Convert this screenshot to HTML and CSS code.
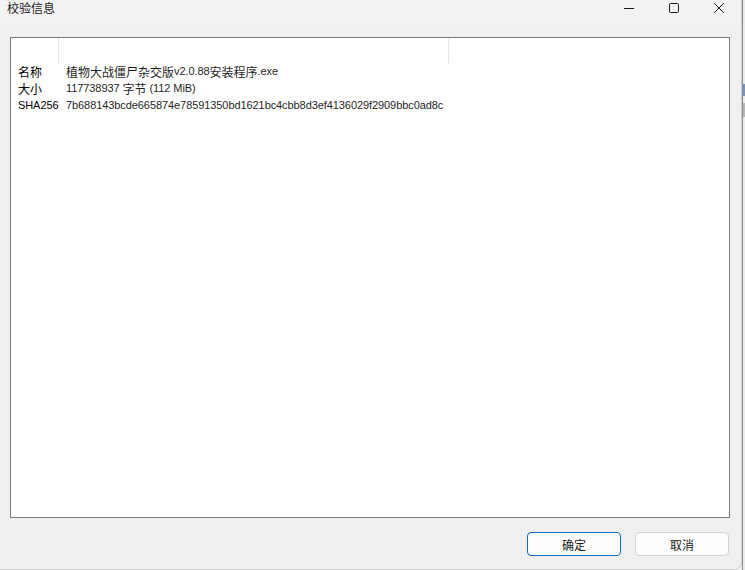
FILE: index.html
```html
<!DOCTYPE html>
<html lang="zh-CN">
<head>
    <meta charset="UTF-8">
    <title>校验信息</title>
    <link rel="stylesheet" href="styles.css">
</head>
<body>
    <div class="desk">
        <div class="window">
            <div class="titlebar">
                <span class="title">校验信息</span>
                <div class="controls">
                    <span class="ctl">
                        <svg width="12" height="12" viewBox="0 0 12 12"><path d="M1 6.5h10" stroke="#1a1a1a" stroke-width="1"/></svg>
                    </span>
                    <span class="ctl">
                        <svg width="12" height="12" viewBox="0 0 12 12"><rect x="1.5" y="1.5" width="9" height="9" rx="1.2" fill="none" stroke="#1a1a1a" stroke-width="1"/></svg>
                    </span>
                    <span class="ctl">
                        <svg width="12" height="12" viewBox="0 0 12 12"><path d="M1 1l10 10M11 1L1 11" stroke="#1a1a1a" stroke-width="1"/></svg>
                    </span>
                </div>
            </div>

            <div class="content">
                <div class="listview">
                    <div class="header">
                        <div class="hcol key"></div>
                        <div class="hcol val"></div>
                    </div>
                    <div class="rows">
                        <div class="row">
                            <span class="key"><span class="cjk">名称</span></span>
                            <span class="val"><span class="cjk">植物大战僵尸杂交版</span>v2.0.88<span class="cjk">安装程序</span>.exe</span>
                        </div>
                        <div class="row">
                            <span class="key"><span class="cjk">大小</span></span>
                            <span class="val">117738937 <span class="cjk">字节</span> (112 MiB)</span>
                        </div>
                        <div class="row">
                            <span class="key">SHA256</span>
                            <span class="val">7b688143bcde665874e78591350bd1621bc4cbb8d3ef4136029f2909bbc0ad8c</span>
                        </div>
                    </div>
                </div>

                <div class="buttons">
                    <button class="btn primary">确定</button>
                    <button class="btn">取消</button>
                </div>
            </div>
        </div>

        <!-- edge of the window behind -->
        <div class="behind">
            <span class="b-text"></span>
            <span class="b-block"></span>
        </div>
    </div>
</body>
</html>
```

FILE: styles.css
```css
body {
    margin: 0;
    padding: 0;
    background-color: #f0f0f0;
    font-family: "Liberation Sans", "Noto Sans CJK SC", sans-serif;
    color: #000;
}

.desk {
    display: flex;
    width: 745px;
    height: 570px;
    overflow: hidden;
}

.window {
    width: 741px;
    height: 569px;
    background-color: #f0f0f0;
    border-right: 1px solid #cfcfcf;
    border-bottom: 1px solid #cfcfcf;
    border-bottom-right-radius: 8px;
    display: flex;
    flex-direction: column;
}

.titlebar {
    height: 24px;
    background-color: #f3f3f3;
    display: flex;
    justify-content: space-between;
}

.title {
    font-family: "Noto Sans CJK SC", sans-serif;
    font-size: 12px;
    line-height: 15px;
    margin-left: 7px;
    color: #1a1a1a;
}

.controls {
    display: flex;
}

.ctl {
    width: 45px;
    height: 16px;
    display: flex;
    align-items: center;
    justify-content: center;
}

.content {
    flex: 1;
    padding: 13px 0 0 10px;
    display: flex;
    flex-direction: column;
}

.listview {
    width: 718px;
    height: 479px;
    background-color: #fff;
    border: 1px solid #7a7a7a;
    display: flex;
    flex-direction: column;
}

.header {
    height: 25px;
    display: flex;
}

.hcol {
    height: 25px;
    border-right: 1px solid #e5e5e5;
}

.hcol.key {
    width: 47px;
}

.hcol.val {
    width: 389px;
}

.row {
    display: flex;
    height: 17px;
    font-size: 11px;
    line-height: 17px;
    letter-spacing: -0.08px;
    color: #000;
}

.row .key {
    width: 41px;
    padding-left: 7px;
}

.row .val {
    padding-left: 7px;
    color: #1f1f1f;
}

.cjk {
    font-family: "Noto Sans CJK SC", sans-serif;
    font-size: 12px;
    letter-spacing: 0;
    vertical-align: top;
}

.buttons {
    display: flex;
    justify-content: flex-end;
    gap: 14px;
    margin-top: 14px;
    padding-right: 12px;
}

.btn {
    width: 94px;
    height: 24px;
    background-color: #fdfdfd;
    border: 1px solid #d0d0d0;
    border-radius: 4px;
    font-family: "Noto Sans CJK SC", sans-serif;
    font-size: 12px;
    color: #1a1a1a;
    padding: 0;
}

.btn.primary {
    border-color: #0f6cbd;
}

.behind {
    flex: 1;
    background-color: #ececec;
    border-left: 1px solid #8a8a8a;
    display: flex;
    flex-direction: column;
    padding-top: 84px;
    gap: 7px;
}

.b-text {
    height: 12px;
    width: 2px;
    background-color: #7a93b8;
}

.b-block {
    height: 14px;
    background-color: #b8b8b8;
}
```
